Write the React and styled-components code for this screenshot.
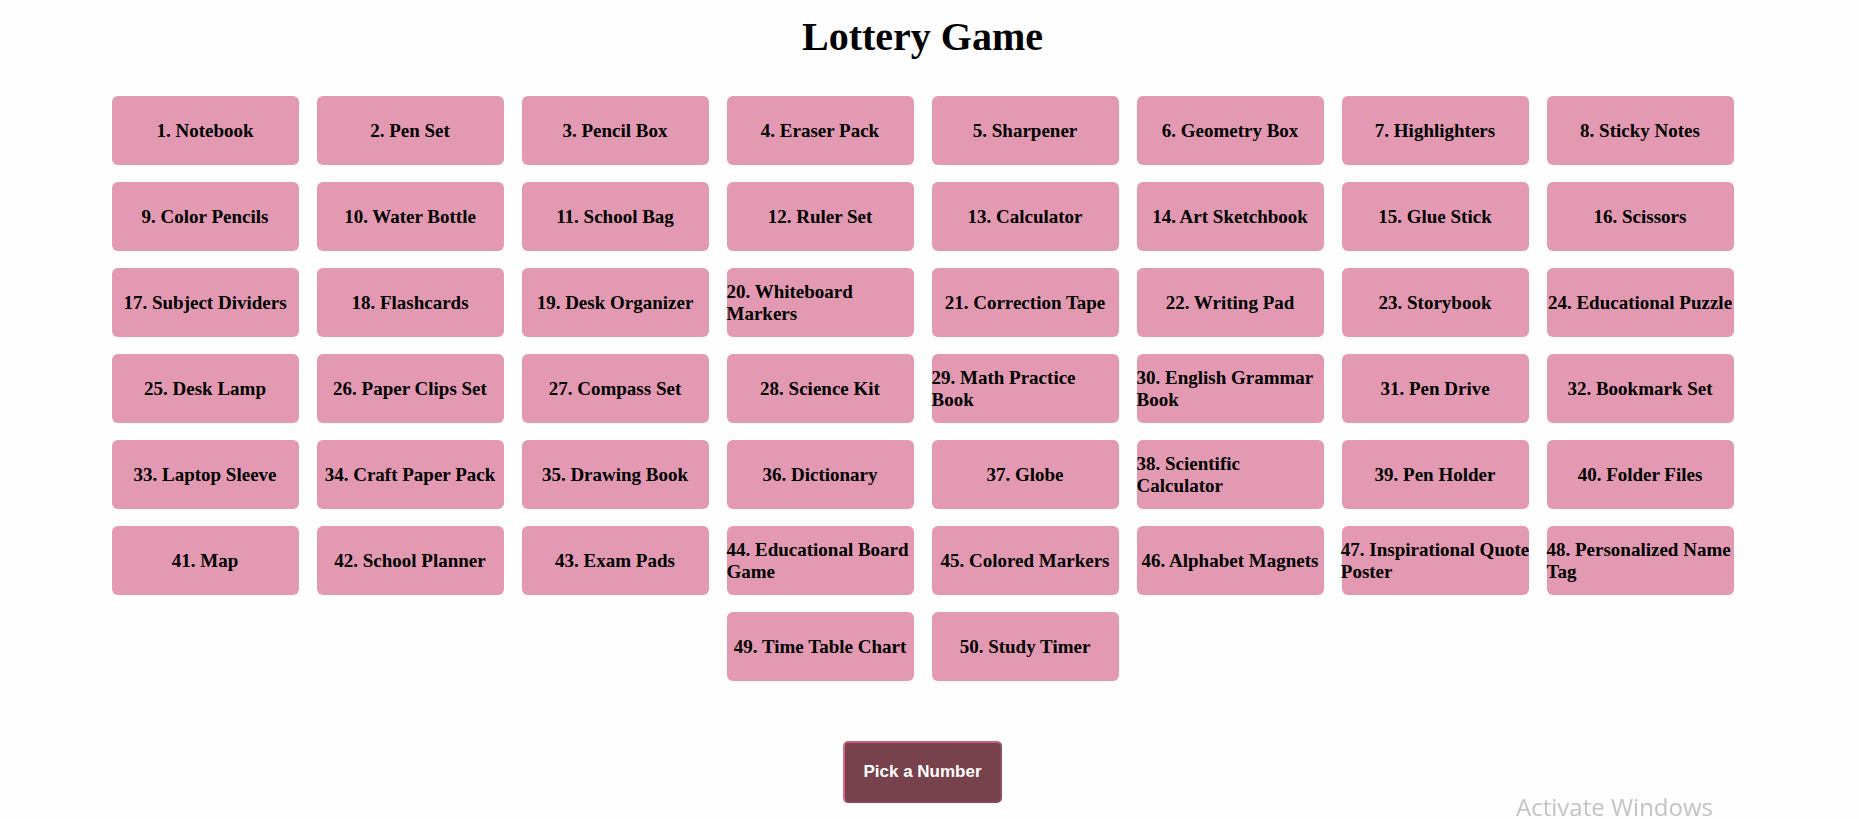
import React, { useState } from "react";
import styled, { createGlobalStyle } from "styled-components";

const GlobalStyle = createGlobalStyle`
  body {
    margin: 0;
    background: #fefefe;
    font-family: "Liberation Serif", "Times New Roman", serif;
    color: #000;
  }
`;

const Page = styled.main`
  display: flex;
  flex-direction: column;
  align-items: center;
  padding: 13px 22px 14px 8px;
`;

const Title = styled.h1`
  margin: 0;
  font-size: 40px;
  line-height: 48px;
  font-weight: bold;
`;

const Board = styled.ul`
  display: flex;
  flex-wrap: wrap;
  justify-content: center;
  gap: 17px 18px;
  list-style: none;
  margin: 35px 0 0;
  padding: 0;
  max-width: 1640px;
`;

const Prize = styled.li`
  display: flex;
  align-items: center;
  justify-content: center;
  width: 187px;
  height: 69px;
  border-radius: 6px;
  background: ${({ $picked }) => ($picked ? "#77424c" : "#e399b2")};
  color: ${({ $picked }) => ($picked ? "#fff" : "#000")};
  font-size: 19px;
  line-height: 22px;
  font-weight: bold;
`;

const PickButton = styled.button`
  margin-top: 60px;
  padding: 18px;
  border: 2px solid;
  border-color: #cb5f80 #8c4f5f #84485a #d46a8b;
  border-radius: 5px;
  background: #77424c;
  color: #fff;
  font-family: "Liberation Sans", Arial, sans-serif;
  font-size: 17px;
  line-height: 22px;
  font-weight: bold;
  cursor: pointer;
`;

const Watermark = styled.div`
  position: fixed;
  right: 146px;
  bottom: 0;
  color: #c3c3c3;
  font-family: "Segoe UI", "Open Sans", sans-serif;
  font-size: 24px;
  line-height: 24px;
  pointer-events: none;
`;

const prizes = [
  "Notebook", "Pen Set", "Pencil Box", "Eraser Pack", "Sharpener",
  "Geometry Box", "Highlighters", "Sticky Notes", "Color Pencils", "Water Bottle",
  "School Bag", "Ruler Set", "Calculator", "Art Sketchbook", "Glue Stick",
  "Scissors", "Subject Dividers", "Flashcards", "Desk Organizer", "Whiteboard Markers",
  "Correction Tape", "Writing Pad", "Storybook", "Educational Puzzle", "Desk Lamp",
  "Paper Clips Set", "Compass Set", "Science Kit", "Math Practice Book", "English Grammar Book",
  "Pen Drive", "Bookmark Set", "Laptop Sleeve", "Craft Paper Pack", "Drawing Book",
  "Dictionary", "Globe", "Scientific Calculator", "Pen Holder", "Folder Files",
  "Map", "School Planner", "Exam Pads", "Educational Board Game", "Colored Markers",
  "Alphabet Magnets", "Inspirational\u00a0Quote Poster", "Personalized Name Tag", "Time Table Chart", "Study Timer",
];

export default function App() {
  const [picked, setPicked] = useState(null);

  return (
    <>
      <GlobalStyle />
      <Page>
        <Title>Lottery Game</Title>
        <Board>
          {prizes.map((name, i) => (
            <Prize key={name} $picked={picked === i}>
              {`${i + 1}.${name.includes("\u00a0") ? "\u00a0" : " "}${name}`}
            </Prize>
          ))}
        </Board>
        <PickButton
          type="button"
          onClick={() => setPicked(Math.floor(Math.random() * prizes.length))}
        >
          Pick a Number
        </PickButton>
      </Page>
      <Watermark>Activate Windows</Watermark>
    </>
  );
}
